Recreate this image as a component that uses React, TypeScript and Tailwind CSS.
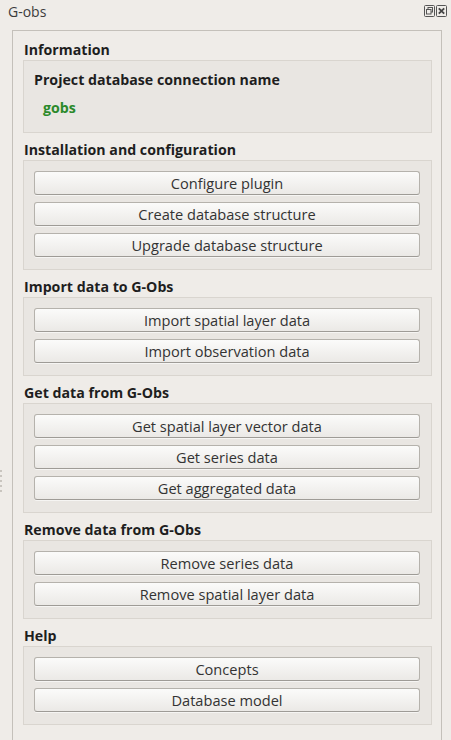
import React from "react";

const font = { fontFamily: '"Open Sans", "Noto Sans", "DejaVu Sans", sans-serif' };

function Btn({ label }: { label: string }) {
  return (
    <div className="h-[24px] flex items-center justify-center rounded-[3px] border border-[#b5b2ac] border-b-[#9e9b96] bg-gradient-to-b from-[#fbfbfa] to-[#ebe9e6] text-[14.6px] leading-[20px] text-[#333333] shadow-[0_1px_0_rgba(255,255,255,0.6)]">
      {label}
    </div>
  );
}

function Header({ title }: { title: string }) {
  return (
    <div className="h-[27px] pt-[7px] pl-[1px] text-[14.2px] leading-[20px] font-bold text-[#1e1e1e]">
      {title}
    </div>
  );
}

function Group({ children }: { children: React.ReactNode }) {
  return (
    <div className="border border-[#d9d5cf] bg-[#e9e6e2] pt-[10px] pb-[12px] pl-[10px] pr-[11px] flex flex-col gap-[7px]">
      {children}
    </div>
  );
}

function Section({ title, buttons }: { title: string; buttons: string[] }) {
  return (
    <div>
      <Header title={title} />
      <Group>
        {buttons.map((b) => (
          <Btn key={b} label={b} />
        ))}
      </Group>
    </div>
  );
}

export default function App() {
  return (
    <div className="relative w-[451px] h-[740px] overflow-hidden bg-[#efece8]" style={font}>
      <div className="h-[22px] flex items-center justify-between pl-[8px] pr-[4px]">
        <span className="text-[14px] text-[#3c3c3c]">G-obs</span>
        <div className="flex items-center gap-[1px]">
          <svg width="11" height="12" viewBox="0 0 11 12">
            <rect x="0.5" y="0.5" width="10" height="11" rx="1" fill="none" stroke="#555" />
            <rect x="4" y="2.5" width="4.5" height="4.5" fill="none" stroke="#555" />
            <rect x="2.5" y="4.5" width="4.5" height="4.5" fill="#efece8" stroke="#555" />
          </svg>
          <svg width="11" height="12" viewBox="0 0 11 12">
            <rect x="0.5" y="0.5" width="10" height="11" rx="1" fill="none" stroke="#555" />
            <path d="M2.8 3.3 L8.2 8.7 M8.2 3.3 L2.8 8.7" stroke="#444" strokeWidth="1.8" />
          </svg>
        </div>
      </div>
      <div className="absolute left-0 top-[470px] flex flex-col gap-[3px]">
        <div className="w-[2px] h-[2px] bg-[#c9c5bf]" />
        <div className="w-[2px] h-[2px] bg-[#c9c5bf]" />
        <div className="w-[2px] h-[2px] bg-[#c9c5bf]" />
        <div className="w-[2px] h-[2px] bg-[#c9c5bf]" />
        <div className="w-[2px] h-[2px] bg-[#c9c5bf]" />
      </div>
      <div className="mt-[8px] ml-[12px] mr-[9px] h-[740px] border border-[#c4c0ba] pt-[2px] pl-[10px] pr-[9px]">
        <Header title="Information" />
        <div className="border border-[#d9d5cf] bg-[#e9e6e2] h-[73px] pl-[10px] pt-[9px]">
          <div className="text-[14.2px] leading-[20px] font-bold text-[#1e1e1e]">
            Project database connection name
          </div>
          <div className="pl-[9px] pt-[8px] text-[14.2px] leading-[20px] font-bold text-[#2b8a2b]">gobs</div>
        </div>
        <Section
          title="Installation and configuration"
          buttons={["Configure plugin", "Create database structure", "Upgrade database structure"]}
        />
        <Section title="Import data to G-Obs" buttons={["Import spatial layer data", "Import observation data"]} />
        <Section
          title="Get data from G-Obs"
          buttons={["Get spatial layer vector data", "Get series data", "Get aggregated data"]}
        />
        <Section title="Remove data from G-Obs" buttons={["Remove series data", "Remove spatial layer data"]} />
        <Section title="Help" buttons={["Concepts", "Database model"]} />
      </div>
    </div>
  );
}
